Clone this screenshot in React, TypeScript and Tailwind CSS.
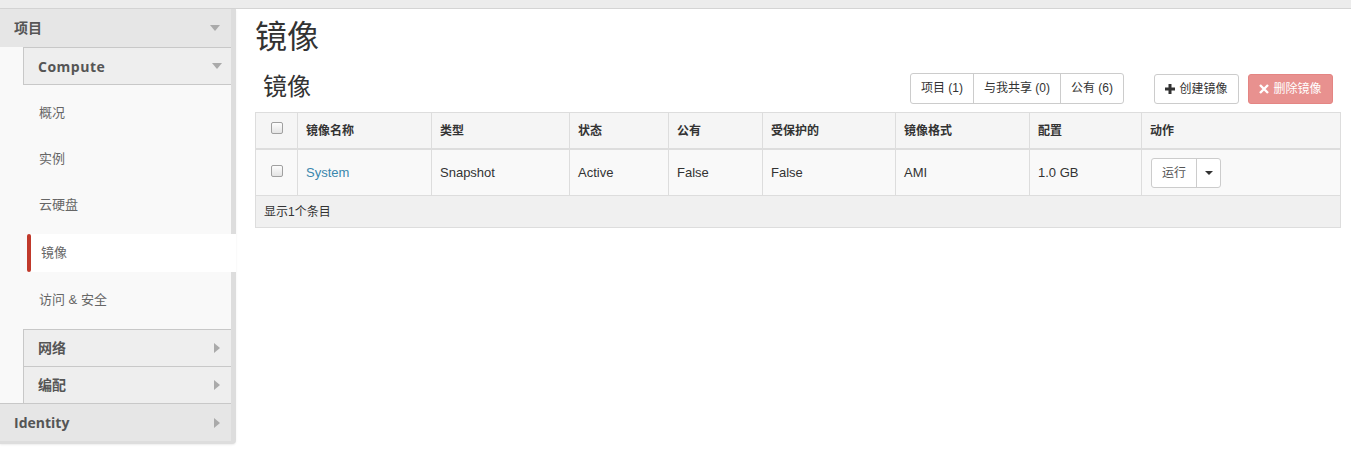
import React from "react";

const font = { fontFamily: '"Liberation Sans", "Noto Sans CJK SC", sans-serif' };

function CaretDown() {
  return (
    <svg width="10" height="6" viewBox="0 0 10 6" className="block">
      <path d="M0 0 L10 0 L5 6 Z" fill="#aaa" />
    </svg>
  );
}
function CaretRight() {
  return (
    <svg width="6" height="10" viewBox="0 0 6 10" className="block">
      <path d="M0 0 L6 5 L0 10 Z" fill="#aaa" />
    </svg>
  );
}

function Checkbox() {
  return (
    <span className="inline-block w-[12px] h-[12px] rounded-[2px] border border-[#a0a0a0] bg-gradient-to-b from-[#fdfdfd] to-[#e4e4e4]" />
  );
}

const cols = "grid grid-cols-[41px_134px_138px_99px_94px_133px_134px_112px_201px]";

export default function App() {
  const items = ["概况", "实例", "云硬盘"];
  return (
    <div className="w-[1351px] h-[452px] bg-white overflow-hidden" style={font}>
      <div className="h-[9px] bg-[#ececec] border-b border-[#d4d4d4]" />
      <div className="flex">
        {/* Sidebar */}
        <div className="w-[236px] shrink-0 flex flex-col">
          <div className="w-[236px] bg-[#dddddd] rounded-br-[4px] pb-[3px] shadow-[0_1px_2px_rgba(0,0,0,0.08)]">
            <div className="w-[231px] h-[38px] bg-[#e6e6e6] flex items-center justify-between pl-[14px] pr-[11px]">
              <span className="text-[14px] font-bold text-[#555]">项目</span>
              <CaretDown />
            </div>
            <div className="w-[231px] bg-[#f9f9f9] pl-[23px]">
              <div className="h-[38px] bg-[#eeeeee] border border-r-0 border-[#c8c8c8] flex items-center justify-between pl-[14px] pr-[9px]">
                <span className="text-[14px] font-bold text-[#555] tracking-[0.5px]" style={{ fontFamily: '"Open Sans", sans-serif' }}>Compute</span>
                <CaretDown />
              </div>
            </div>
            <div className="w-[231px] h-[5px] bg-[#f9f9f9]" />
            {items.map((t) => (
              <div key={t} className="w-[231px] h-[46px] bg-[#f9f9f9] flex items-center pl-[39px] text-[13px] text-[#666]">
                {t}
              </div>
            ))}
            <div className="w-[231px] bg-[#f9f9f9] pl-[27px] pt-[6px]">
              <div className="w-[209px] h-[38px] bg-white flex items-center relative">
                <div className="w-[4px] h-[38px] bg-[#c0392b] rounded-[2px]" />
                <span className="pl-[10px] text-[13px] text-[#666]">镜像</span>
              </div>
            </div>
            <div className="w-[231px] h-[57px] bg-[#f9f9f9] flex items-center pl-[39px] text-[13px] text-[#666] pb-[1px]">
              访问 &amp; 安全
            </div>
            <div className="w-[231px] bg-[#f9f9f9] pl-[23px]">
              <div className="h-[37px] bg-[#eeeeee] border-t border-l border-[#c8c8c8] flex items-center justify-between pl-[14px] pr-[11px]">
                <span className="text-[14px] font-bold text-[#555]">网络</span>
                <CaretRight />
              </div>
              <div className="h-[37px] bg-[#eeeeee] border-t border-l border-[#c8c8c8] flex items-center justify-between pl-[14px] pr-[11px]">
                <span className="text-[14px] font-bold text-[#555]">编配</span>
                <CaretRight />
              </div>
            </div>
            <div className="w-[231px] h-[38px] bg-[#e6e6e6] border-t border-[#c8c8c8] flex items-center justify-between pl-[14px] pr-[11px]">
              <span className="text-[14px] font-bold text-[#555]" style={{ fontFamily: '"Open Sans", sans-serif' }}>Identity</span>
              <CaretRight />
            </div>
          </div>
        </div>

        {/* Main */}
        <div className="flex-1 pl-[19px] pr-[10px]">
          <h1 className="text-[32px] leading-[40px] text-[#333] mt-[8px]">镜像</h1>
          <div className="flex items-center mt-[16px] h-[30px]">
            <h2 className="text-[24px] leading-[30px] text-[#333] ml-[8px] -mt-[2px]">镜像</h2>
            <div className="ml-auto mr-[8px] flex text-[12px] text-[#333]">
              <div className="flex h-[31px] border border-[#ccc] rounded-[3px]">
                <span className="px-[10px] flex items-center">项目 (1)</span>
                <span className="px-[10px] flex items-center border-l border-[#ccc]">与我共享 (0)</span>
                <span className="px-[10px] flex items-center border-l border-[#ccc]">公有 (6)</span>
              </div>
              <div className="ml-[30px] h-[30px] mt-[1px] w-[85px] border border-[#ccc] rounded-[3px] flex items-center justify-center gap-[4px]">
                <svg width="10" height="10" viewBox="0 0 10 10"><path d="M3.5 0h3v3.5H10v3H6.5V10h-3V6.5H0v-3h3.5z" fill="#333" /></svg>
                创建镜像
              </div>
              <div className="ml-[9px] h-[30px] mt-[1px] w-[85px] rounded-[3px] bg-[#e8918f] border border-[#e48583] text-white flex items-center justify-center gap-[4px]">
                <svg width="10" height="10" viewBox="0 0 10 10"><path d="M1 1 L9 9 M9 1 L1 9" stroke="#fff" strokeWidth="2.4" /></svg>
                删除镜像
              </div>
            </div>
          </div>

          <div className="mt-[9px] w-[1086px] border border-[#ddd] text-[12px] text-[#333]">
            <div className={`${cols} h-[37px] bg-[#f5f5f5] border-b-2 border-[#ddd] font-bold`}>
              <div className="flex items-start justify-center pt-[9px]"><Checkbox /></div>
              {["镜像名称", "类型", "状态", "公有", "受保护的", "镜像格式", "配置", "动作"].map((h) => (
                <div key={h} className="border-l border-[#ddd] flex items-center pl-[8px]">{h}</div>
              ))}
            </div>
            <div className={`${cols} h-[46px] bg-[#f9f9f9] border-b border-[#ddd]`}>
              <div className="flex items-start justify-center pt-[15px]"><Checkbox /></div>
              <div className="border-l border-[#ddd] flex items-center pl-[8px] text-[#3a87ad] text-[13px]">System</div>
              {["Snapshot", "Active", "False", "False", "AMI", "1.0 GB"].map((c, i) => (
                <div key={i} className="border-l border-[#ddd] flex items-center pl-[8px] text-[13px]">{c}</div>
              ))}
              <div className="border-l border-[#ddd] flex items-center pl-[9px]">
                <div className="flex h-[30px] border border-[#ccc] rounded-[3px] bg-white">
                  <span className="px-[10px] flex items-center text-[12px] text-[#555]">运行</span>
                  <span className="w-[24px] border-l border-[#ccc] flex items-center justify-center">
                    <svg width="8" height="4" viewBox="0 0 8 4"><path d="M0 0h8L4 4z" fill="#333" /></svg>
                  </span>
                </div>
              </div>
            </div>
            <div className="h-[31px] bg-[#f0f0f0] flex items-center pl-[8px] text-[12px]">显示1个条目</div>
          </div>
        </div>
      </div>
    </div>
  );
}
